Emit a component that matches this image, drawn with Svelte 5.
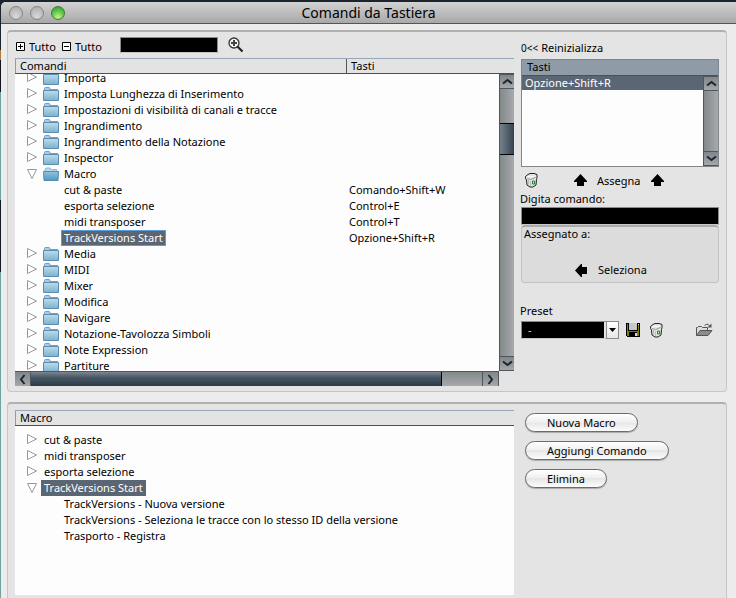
<script>
  const commands = [
    { name: 'Importa', kind: 'closed' },
    { name: 'Imposta Lunghezza di Inserimento', kind: 'closed' },
    { name: 'Impostazioni di visibilità di canali e tracce', kind: 'closed' },
    { name: 'Ingrandimento', kind: 'closed' },
    { name: 'Ingrandimento della Notazione', kind: 'closed' },
    { name: 'Inspector', kind: 'closed' },
    { name: 'Macro', kind: 'open' },
    { name: 'cut & paste', kind: 'leaf', keys: 'Comando+Shift+W' },
    { name: 'esporta selezione', kind: 'leaf', keys: 'Control+E' },
    { name: 'midi transposer', kind: 'leaf', keys: 'Control+T' },
    { name: 'TrackVersions Start', kind: 'leaf', keys: 'Opzione+Shift+R', selected: true },
    { name: 'Media', kind: 'closed' },
    { name: 'MIDI', kind: 'closed' },
    { name: 'Mixer', kind: 'closed' },
    { name: 'Modifica', kind: 'closed' },
    { name: 'Navigare', kind: 'closed' },
    { name: 'Notazione-Tavolozza Simboli', kind: 'closed' },
    { name: 'Note Expression', kind: 'closed' },
    { name: 'Partiture', kind: 'closed' }
  ];

  const macros = [
    { name: 'cut & paste', kind: 'closed' },
    { name: 'midi transposer', kind: 'closed' },
    { name: 'esporta selezione', kind: 'closed' },
    { name: 'TrackVersions Start', kind: 'open', selected: true },
    { name: 'TrackVersions - Nuova versione', kind: 'leaf' },
    { name: 'TrackVersions - Seleziona le tracce con lo stesso ID della versione', kind: 'leaf' },
    { name: 'Trasporto - Registra', kind: 'leaf' }
  ];

  let search = $state('');
  let shortcut = $state('');
  let preset = $state('-');
</script>

{#snippet toggle(kind, name)}
  <button class="toggle" aria-label="{kind === 'open' ? 'Chiudi' : 'Apri'} {name}">
    <svg width="12" height="12" viewBox="0 0 12 12" fill="#fff" stroke="#999">
      {#if kind === 'open'}
        <path d="M1.500 1.500h9L6 10.500z" />
      {:else}
        <path d="M1.500.5v9L10.500 5z" />
      {/if}
    </svg>
  </button>
{/snippet}

{#snippet folder(kind)}
  <svg class="folder" width="16" height="15" viewBox="0 0 16 15">
    {#if kind === 'open'}
      <path d="M2 4V2.500Q2 1 3.500 1H7l1.500 1.500H13q1 0 1 1V5" fill="#b9d9ea" stroke="#8db9d0" />
      <path d="M.5 4.500h15l-.5 9H1z" fill="url(#folder-open)" stroke="#4e8fb5" />
    {:else}
      <path d="M1.500 4V1.500Q1.500.5 2.500.5H6Q7 .5 7 2.500h7.500V4" fill="#a9cde0" stroke="#6f9fba" />
      <path d="M.5 3.500h15v10H.5z" fill="url(#folder-closed)" stroke="#5b8fae" />
    {/if}
  </svg>
{/snippet}

{#snippet chevron(dir)}
  <svg width="13" height="13" viewBox="0 0 13 13" fill="none" stroke="#1c2730" stroke-width="2">
    {#if dir === 'up'}<path d="M2 8.500 6.500 5 11 8.500" />
    {:else if dir === 'down'}<path d="M2 4.500 6.500 8 11 4.500" />
    {:else if dir === 'left'}<path d="M8.500 2 5 6.500 8.500 11" />
    {:else}<path d="M4.500 2 8 6.500 4.500 11" />{/if}
  </svg>
{/snippet}

{#snippet trash()}
  <svg width="13" height="15" viewBox="0 0 13 15" fill="none">
    <path d="M.5 3.500 3 1.500 5 .5h4l3 1v3l-.5 2-.5 5.500-3 2h-3l-3-2-.5-5-1-1.500z" fill="#e2e2e2" stroke="#222" />
    <path d="M2 4.500 5 3l2 1 3-1.500" stroke="#fff" />
    <path d="M2 5.500 5.500 6.500 10.500 4.500" stroke="#999" />
    <path d="M3.500 7v4.500M5.500 8v5" stroke="#bbb" />
    <path d="M7.500 8h2v3h-2z" fill="#d6f0d6" stroke="#118a2a" />
  </svg>
{/snippet}

{#snippet arrow(dir)}
  <svg width="13" height="13" viewBox="0 0 13 13" fill="#000">
    {#if dir === 'up'}<path d="M6.500 0 13 7v1H10v4H3V8H0V7z" />
    {:else}<path d="M0 6.500 6 0h1v3h5v7H7v3H6z" />{/if}
  </svg>
{/snippet}

<svg class="defs" width="0" height="0" aria-hidden="true">
  <defs>
    <linearGradient id="folder-closed" x1="0" y1="0" x2="0" y2="1">
      <stop offset="0" stop-color="#bcdcec" />
      <stop offset="1" stop-color="#7db0cf" />
    </linearGradient>
    <linearGradient id="folder-open" x1="0" y1="0" x2="0" y2="1">
      <stop offset="0" stop-color="#93c3dd" />
      <stop offset="1" stop-color="#5298c2" />
    </linearGradient>
  </defs>
</svg>

<div class="desktop">
  <main class="window">
    <header class="titlebar">
      <div class="lights">
        <button class="light" aria-label="Chiudi"></button>
        <button class="light" aria-label="Riduci"></button>
        <button class="light green" aria-label="Ingrandisci"></button>
      </div>
      <h1>Comandi da Tastiera</h1>
    </header>

    <section class="group">
      <div class="left">
        <div class="toolbar">
          <button class="plain all">
            <svg width="9" height="9" viewBox="0 0 9 9" fill="#fff" stroke="#000"><path d="M.5.5h8v8h-8zM2 4.500h5M4.500 2v5" /></svg>
            Tutto
          </button>
          <button class="plain all">
            <svg width="9" height="9" viewBox="0 0 9 9" fill="#fff" stroke="#000"><path d="M.5.5h8v8h-8zM2 4.500h5" /></svg>
            Tutto
          </button>
          <input class="dark search" type="text" aria-label="Cerca" bind:value={search} />
          <button class="plain" aria-label="Avvia ricerca">
            <svg width="16" height="16" viewBox="0 0 16 16" fill="none">
              <circle cx="6" cy="6" r="5" fill="#f2f2f2" stroke="#333" stroke-width="1.300" />
              <path d="M3 6h6M6 3v6" stroke="#444" stroke-width="2" />
              <path d="m9.500 9.500 5 5" stroke="#222" stroke-width="2.200" />
            </svg>
          </button>
        </div>

        <div class="pane">
          <table class="tree commands">
            <thead>
              <tr><th>Comandi</th><th>Tasti</th></tr>
            </thead>
            <tbody>
              {#each commands as row}
                <tr>
                  <td class={row.kind}>
                    {#if row.kind !== 'leaf'}
                      {@render toggle(row.kind, row.name)}
                      {@render folder(row.kind)}
                    {/if}
                    <span class="name" class:selected={row.selected} class:focus={row.selected}>{row.name}</span>
                  </td>
                  <td>{row.keys ?? ''}</td>
                </tr>
              {/each}
            </tbody>
          </table>
          <div class="vbar tall">
            <button aria-label="Scorri su">{@render chevron('up')}</button>
            <div class="track"><div class="thumb"></div></div>
            <button aria-label="Scorri giù">{@render chevron('down')}</button>
          </div>
          <div class="hbar">
            <button aria-label="Scorri a sinistra">{@render chevron('left')}</button>
            <div class="track"><div class="thumb"></div></div>
            <button aria-label="Scorri a destra">{@render chevron('right')}</button>
          </div>
        </div>
      </div>

      <div class="right">
        <button class="plain reset"><span class="glyph">0&lt;&lt;</span> Reinizializza</button>
        <div class="keys">
          <table>
            <thead><tr><th>Tasti</th></tr></thead>
            <tbody><tr><td>Opzione+Shift+R</td></tr></tbody>
          </table>
          <div class="vbar">
            <button aria-label="Scorri tasti su">{@render chevron('up')}</button>
            <div class="track"></div>
            <button aria-label="Scorri tasti giù">{@render chevron('down')}</button>
          </div>
        </div>

        <div class="assign">
          <button class="plain" aria-label="Elimina tasto">{@render trash()}</button>
          <button class="plain do">{@render arrow('up')} Assegna {@render arrow('up')}</button>
        </div>

        <label class="caption" for="shortcut">Digita comando:</label>
        <input class="dark key" id="shortcut" type="text" bind:value={shortcut} />
        <div class="assigned">
          <p>Assegnato a:</p>
          <button class="plain do">{@render arrow('left')} Seleziona</button>
        </div>

        <label class="caption preset-label" for="preset">Preset</label>
        <div class="presets">
          <div class="combo">
            <select class="dark" id="preset" bind:value={preset}>
              <option>-</option>
            </select>
            <span class="drop">
              <svg width="7" height="4" viewBox="0 0 7 4"><path d="M0 0h7L3.500 4z" /></svg>
            </span>
          </div>
          <button class="plain" aria-label="Salva preset">
            <svg width="14" height="14" viewBox="0 0 14 14" shape-rendering="crispEdges">
              <path d="M0 0h14v14H1L0 13z" fill="#000" />
              <path d="M1 1h1v12H1zM12 2h1v11h-1zM2 8h10v1H2zM2 9h1v4H2zM11 9h1v4h-1z" fill="#808000" />
              <path d="M3 0h8v7H3z" fill="#c6c6c6" />
              <path d="M12 1h1v1h-1zM9 10h2v3H9z" fill="#d8d8d8" />
            </svg>
          </button>
          <button class="plain" aria-label="Elimina preset">{@render trash()}</button>
          <button class="plain open" aria-label="Apri preset">
            <svg width="17" height="14" viewBox="0 0 17 14" fill="none" stroke="#555">
              <path d="M.5 12.500v-8h1l1-1h3l1 1h5v3" fill="#ddd" />
              <path d="M.5 12.500 4 7.500h12l-4 5z" fill="#8c8c8c" />
              <path d="M8.500 2.500q2.500-3 5 0" />
              <path d="M15.500.5v4h-4z" fill="#555" stroke="none" />
            </svg>
          </button>
        </div>
      </div>
    </section>

    <section class="group lower">
      <div class="left">
        <table class="tree macros">
          <thead>
            <tr><th>Macro</th></tr>
          </thead>
          <tbody>
            {#each macros as row}
              <tr>
                <td class={row.kind}>
                  {#if row.kind !== 'leaf'}{@render toggle(row.kind, row.name)}{/if}
                  <span class="name" class:selected={row.selected}>{row.name}</span>
                </td>
              </tr>
            {/each}
          </tbody>
        </table>
      </div>
      <div class="right actions">
        <button class="pill">Nuova Macro</button>
        <button class="pill">Aggiungi Comando</button>
        <button class="pill">Elimina</button>
      </div>
    </section>
  </main>
</div>

<style>
  :global(body) {
    margin: 0;
    overflow: hidden;
    background: #ececec;
  }
  .defs {
    position: absolute;
  }
  .desktop {
    box-sizing: border-box;
    height: 100vh;
    padding: 2px 0 0 1px;
    background: linear-gradient(#1b242d 0 50px, #a87f3a 50px 60px, #10151c 60px 92px, #6fa3a3 92px 200px, #141a22 200px 272px, #6fa3a3 272px);
    font: 11px/16px "Noto Sans", sans-serif;
    color: #000;
    overflow: hidden;
  }
  .window {
    display: flex;
    flex-direction: column;
    height: 100%;
    background: #ececec;
    border-radius: 5px 0 0 0;
  }
  button,
  input,
  select {
    font: inherit;
    color: inherit;
    margin: 0;
    padding: 0;
    border: 0;
    border-radius: 0;
  }
  svg {
    display: block;
    flex: none;
  }
  .titlebar {
    flex: none;
    display: grid;
    grid-template-columns: 1fr auto 1fr;
    align-items: center;
    height: 21px;
    padding: 0 8px;
    border-bottom: 1px solid #555;
    border-radius: 5px 0 0 0;
    background: linear-gradient(#d2d2d2, #a8a8a8);
  }
  h1 {
    margin: 0;
    font-size: 14px;
    line-height: 20px;
    font-weight: 400;
  }
  .lights {
    display: flex;
    gap: 7px;
  }
  .light {
    width: 14px;
    height: 14px;
    border: 1px solid #858585;
    border-radius: 50%;
    background: radial-gradient(circle at 50% 80%, #d8d8d8, #a9a9a9);
  }
  .light.green {
    border-color: #3f7a35;
    background: radial-gradient(circle at 50% 85%, #c6f58a, #5cc24a 55%, #3c9a35);
  }
  .group {
    flex: none;
    display: flex;
    gap: 6px;
    box-sizing: border-box;
    margin: 6px 9px 0 6px;
    padding: 0 7px 5px;
    border: 1px solid #c6c6c6;
    border-top: 2px solid #b0b0b0;
    border-radius: 4px;
    background: #e4e4e4;
  }
  .lower {
    flex: 1;
    margin-top: 10px;
    padding: 6px 7px 3px;
    border-bottom: 0;
    border-radius: 4px 4px 0 0;
  }
  .left {
    flex: 1;
    min-width: 0;
    display: flex;
    flex-direction: column;
  }
  .right {
    flex: none;
    width: 199px;
    display: flex;
    flex-direction: column;
    align-items: flex-start;
  }
  .toolbar {
    display: flex;
    align-items: center;
    height: 26px;
    gap: 6px;
    padding-left: 1px;
  }
  .plain {
    display: flex;
    align-items: center;
    background: none;
  }
  .all {
    gap: 4px;
    padding-top: 3px;
  }
  .dark {
    box-sizing: border-box;
    background: #000;
    color: #c9dcf5;
    border: 1px solid #8a8a8a;
    border-bottom-color: #c8c8c8;
  }
  .search {
    width: 98px;
    height: 16px;
    margin: 0 4px 0 12px;
  }

  .pane {
    display: grid;
    grid-template-columns: 1fr 15px;
    grid-template-rows: 16px 297px 15px;
  }
  .tree {
    display: flex;
    flex-direction: column;
    grid-area: 1 / 1 / 3 / 3;
    background: #fdfdfd;
  }
  thead,
  tbody {
    display: block;
  }
  thead tr {
    display: flex;
    box-sizing: border-box;
    height: 16px;
    border-top: 1px solid #9aa8b8;
    border-bottom: 1px solid #505050;
    background: #e3e3e3;
  }
  th,
  td {
    padding: 0;
    text-align: left;
    font-weight: 400;
    white-space: nowrap;
  }
  th {
    padding-left: 4px;
    line-height: 14px;
    border-left: 1px solid #8e9cab;
    flex: 1;
  }
  .commands th:first-child {
    box-sizing: border-box;
    flex: none;
    width: 331px;
  }
  .commands th + th {
    border-color: #505860;
  }
  .tree tbody {
    overflow: hidden;
  }
  .commands tbody {
    height: 297px;
  }
  .commands tbody tr:first-child {
    margin-top: -4px;
  }
  .tree tbody tr {
    display: flex;
    height: 16px;
  }
  .tree td {
    display: flex;
    align-items: center;
    height: 16px;
  }
  .commands td:first-child {
    box-sizing: border-box;
    width: 334px;
  }
  .tree td.closed,
  .tree td.open {
    padding-left: 11px;
  }
  .commands td.leaf,
  .macros td.leaf {
    padding-left: 46px;
  }
  .toggle {
    width: 12px;
    height: 14px;
    margin-right: 5px;
    background: none;
  }
  .macros .toggle {
    margin-right: 3px;
  }
  .folder {
    margin-right: 2px;
  }
  .name {
    box-sizing: border-box;
    height: 16px;
    padding: 0 3px;
    line-height: 16px;
  }
  .selected {
    background: #5a6673;
    color: #fff;
  }
  .focus {
    outline: 1px solid #5b9bd8;
    outline-offset: -1px;
  }
  .macros {
    flex: 1;
  }
  .macros tbody {
    padding-top: 6px;
  }

  .vbar,
  .hbar {
    display: flex;
    box-sizing: border-box;
  }
  .vbar {
    flex-direction: column;
    width: 15px;
    border-left: 1px solid #50565c;
  }
  .tall {
    grid-area: 2 / 2;
  }
  .hbar {
    grid-area: 3 / 1;
    border-top: 1px solid #50565c;
    border-right: 1px solid #50565c;
  }
  .vbar button,
  .hbar button {
    flex: none;
    display: flex;
    align-items: center;
    justify-content: center;
    width: 15px;
    height: 15px;
    background: linear-gradient(#80868a, #a4a8ab);
  }
  .vbar button {
    width: 14px;
    border: solid #50565c;
    border-width: 1px 0;
  }
  .hbar button {
    height: 14px;
  }
  .track {
    flex: 1;
    background: linear-gradient(90deg, #83888b, #a7aaac);
  }
  .hbar .track {
    display: flex;
    background: linear-gradient(#83888b, #a7aaac);
    border: solid #50565c;
    border-width: 0 1px;
  }
  .vbar .thumb {
    height: 30px;
    margin-top: 34px;
    border: solid #000;
    border-width: 1px 0;
    background: linear-gradient(90deg, #75828e, #33424f);
  }
  .hbar .thumb {
    width: 91%;
    border-right: 1px solid #000;
    background: linear-gradient(#7b8690, #465663 40%, #2e3c49);
  }

  .reset {
    box-sizing: border-box;
    height: 26px;
    gap: 3px;
    margin-bottom: 1px;
    padding: 6px 0 0 1px;
  }
  .glyph {
    font-size: 10px;
  }
  .keys {
    display: grid;
    grid-template-columns: 1fr 15px;
    grid-template-rows: 16px 90px;
    box-sizing: border-box;
    align-self: stretch;
    height: 108px;
    border: 1px solid #7f868c;
    margin-left: 1px;
    background: #fdfdfd;
  }
  .keys table {
    grid-area: 1 / 1 / 3 / 3;
    display: block;
    border-spacing: 0;
  }
  .keys thead tr {
    border-top: 0;
    background: #8f9ba6;
  }
  .keys tbody tr,
  .keys td {
    display: block;
  }
  .keys td {
    height: 14px;
    padding-left: 3px;
    line-height: 14px;
    background: #5a6673;
    color: #fff;
  }
  .keys .vbar {
    grid-area: 2 / 2;
  }
  .assign {
    display: flex;
    align-items: center;
    gap: 36px;
    height: 27px;
    padding-left: 5px;
  }
  .do {
    gap: 10px;
  }
  .caption {
    line-height: 10px;
    margin-bottom: 3px;
  }
  .key,
  .assigned {
    box-sizing: border-box;
    align-self: stretch;
    margin-left: 1px;
  }
  .key {
    height: 18px;
  }
  .assigned {
    height: 58px;
    padding: 0 2px;
    border: 1px solid #c2c2c2;
    border-top: 2px solid #ababab;
    border-radius: 4px;
    background: #dcdcdc;
  }
  .assigned p {
    margin: 0;
    line-height: 14px;
  }
  .assigned .do {
    margin: 21px 0 0 51px;
  }
  .preset-label {
    margin-top: 23px;
    margin-bottom: 5px;
  }
  .presets {
    box-sizing: border-box;
    display: flex;
    align-items: center;
    width: 100%;
    gap: 10px;
    padding-left: 1px;
  }
  .combo {
    position: relative;
    width: 98px;
    height: 18px;
    margin-right: -3px;
    background: linear-gradient(90deg, #000 83px, #e4e4e4 83px);
  }
  .combo select {
    display: block;
    width: 98px;
    height: 18px;
    padding-left: 6px;
    appearance: none;
    background: none;
    border-right: 0;
  }
  .drop {
    position: absolute;
    top: 0;
    right: 0;
    display: flex;
    align-items: center;
    justify-content: center;
    box-sizing: border-box;
    width: 13px;
    height: 18px;
    border: 1px solid #8a8a8a;
    background: linear-gradient(#fff, #e6e6e6);
    pointer-events: none;
  }
  .open.plain {
    margin: 0 6px 0 auto;
  }

  .actions {
    gap: 9px;
    padding: 3px 0 0 5px;
    box-sizing: border-box;
  }
  .pill {
    height: 19px;
    padding: 0 21px;
    line-height: 17px;
    border: 1px solid #6c6c6c;
    border-radius: 10px;
    background: linear-gradient(#fff, #efefef 50%, #e6e6e6 50%, #fcfcfc);
    box-shadow: 0 1px 1px #aaa;
  }
</style>
